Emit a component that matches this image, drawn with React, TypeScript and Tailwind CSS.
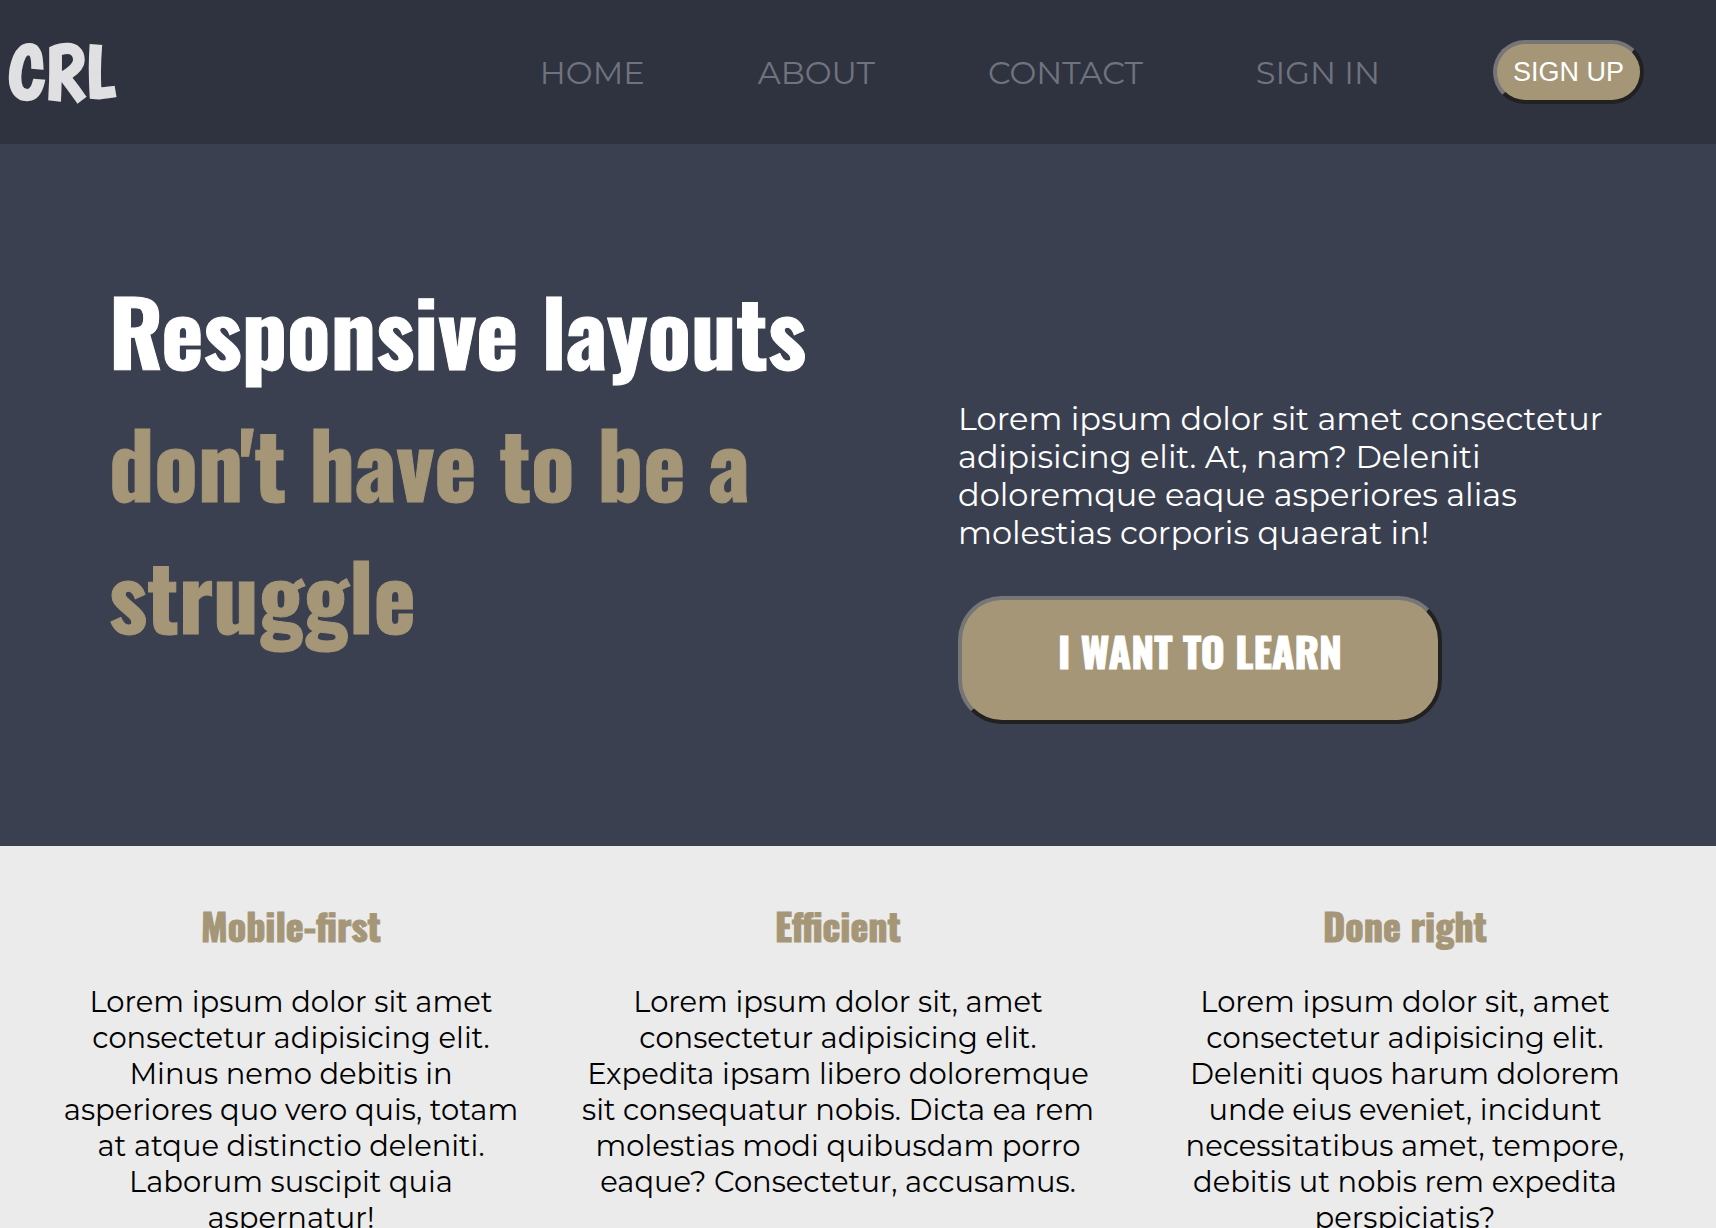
const NAV_LINKS = ["HOME", "ABOUT", "CONTACT", "SIGN IN"];

const FEATURES = [
  {
    title: "Mobile-first",
    text: "Lorem ipsum dolor sit amet consectetur adipisicing elit. Minus nemo debitis in asperiores quo vero quis, totam at atque distinctio deleniti. Laborum suscipit quia aspernatur!",
  },
  {
    title: "Efficient",
    text: "Lorem ipsum dolor sit, amet consectetur adipisicing elit. Expedita ipsam libero doloremque sit consequatur nobis. Dicta ea rem molestias modi quibusdam porro eaque? Consectetur, accusamus.",
  },
  {
    title: "Done right",
    text: "Lorem ipsum dolor sit, amet consectetur adipisicing elit. Deleniti quos harum dolorem unde eius eveniet, incidunt necessitatibus amet, tempore, debitis ut nobis rem expedita perspiciatis?",
  },
];

function Header() {
  return (
    <header className="flex items-center justify-between bg-[#2f333f] py-10 pr-[72px] pl-2">
      <a
        href="#"
        className="font-['Boogaloo','Roboto_Condensed',sans-serif] text-[76px] leading-[60px] font-bold text-[#e0e0e2]"
      >
        CRL
      </a>
      <nav className="flex items-center gap-[113px]">
        {NAV_LINKS.map((label) => (
          <a key={label} href="#" className="pt-0.5 text-[32px] leading-10 text-[#6f737f]">
            {label}
          </a>
        ))}
        <button
          type="button"
          className="h-16 rounded-[32px] border-4 border-t-[#767676] border-r-[#212121] border-b-[#212121] border-l-[#767676] bg-[#a59677] px-4 font-['Liberation_Sans',Arial,sans-serif] text-[27px] leading-8 text-white"
        >
          SIGN UP
        </button>
      </nav>
    </header>
  );
}

function Hero() {
  return (
    <section className="grid grid-cols-[1fr_758px] bg-[#3b4050] pt-30 pb-[122px] pl-[109px]">
      <h1 className="font-['Oswald','Roboto_Condensed',sans-serif] text-[90px] leading-[132px] font-bold text-white [-webkit-text-stroke:1px]">
        Responsive layouts
        <span className="block text-[#a59677]">
          don't have to be a
          <br />
          struggle
        </span>
      </h1>
      <div className="flex flex-col items-start gap-11 pt-[136px] pr-24">
        <p className="text-[32px] leading-[38px] text-white">
          Lorem ipsum dolor sit amet consectetur adipisicing elit. At, nam? Deleniti doloremque eaque asperiores
          alias molestias corporis quaerat in!
        </p>
        <button
          type="button"
          className="rounded-[44px] border-4 border-t-[#767676] border-r-[#212121] border-b-[#212121] border-l-[#767676] bg-[#a59677] px-24 pt-5 pb-[38px] font-['Oswald','Roboto_Condensed',sans-serif] text-[41px] leading-[62px] font-bold text-white [-webkit-text-stroke:1px]"
        >
          I WANT TO LEARN
        </button>
      </div>
    </section>
  );
}

function Features() {
  return (
    <section className="grid grid-cols-[582fr_512fr_622fr] bg-[#ebebeb] pt-[51px] pb-16 text-center text-black">
      {FEATURES.map((feature) => (
        <article key={feature.title} className="flex flex-col items-center gap-[31px] first:px-15">
          <h2 className="font-['Oswald','Roboto_Condensed',sans-serif] text-[38px] leading-14 font-bold text-[#a59677] [-webkit-text-stroke:1px]">
            {feature.title}
          </h2>
          <p className="max-w-[512px] text-[29px] leading-9">{feature.text}</p>
        </article>
      ))}
    </section>
  );
}

export default function App() {
  return (
    <div className="min-h-screen bg-[#ebebeb] font-['Montserrat','Inter',sans-serif]">
      <Header />
      <Hero />
      <Features />
    </div>
  );
}
